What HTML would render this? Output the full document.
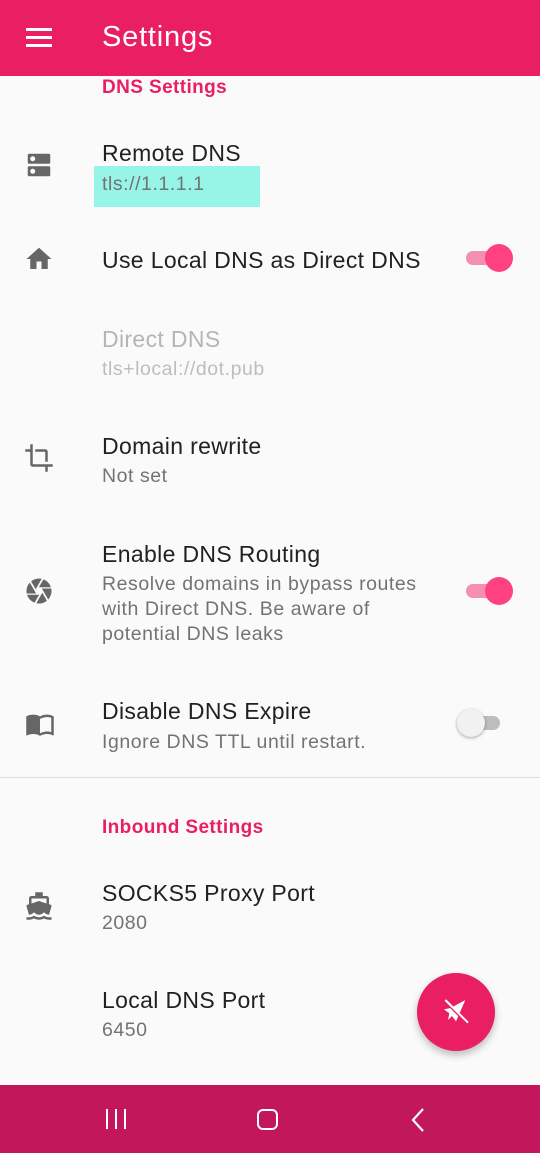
<!DOCTYPE html>
<html><head><meta charset="utf-8"><style>
*{margin:0;padding:0;box-sizing:border-box}
body{width:540px;height:1153px;background:#fafafa;font-family:"Liberation Sans",Roboto,sans-serif;position:relative;overflow:hidden}
.a{position:absolute}
.bar{left:0;top:0;width:540px;height:76px;background:#e91e63}
.t{font-size:23px;letter-spacing:.35px;color:#212121;left:102px;white-space:nowrap}
.s{font-size:19.5px;letter-spacing:.55px;color:#737373;left:102px;line-height:25px;white-space:nowrap}
.h{font-size:19px;letter-spacing:.4px;color:#e91e63;font-weight:bold;left:102px}
.ic{left:24px}
.sw{width:34px;height:14px;border-radius:7px;left:466px}
.k{width:28px;height:28px;border-radius:50%}
</style></head><body>
<div class="a bar"></div>
<div class="a" style="left:26px;top:28px;width:26px;height:3px;background:#fff;box-shadow:0 8px #fff,0 16px #fff"></div>
<div class="a" style="left:102px;top:21px;font-size:29px;letter-spacing:.8px;color:#fff">Settings</div>
<div class="a h" style="top:77px">DNS Settings</div>

<svg class="a ic" style="top:150px" width="30" height="30" viewBox="0 0 24 24"><path fill="#666" d="M20 13H4c-.55 0-1 .45-1 1v6c0 .55.45 1 1 1h16c.55 0 1-.45 1-1v-6c0-.55-.45-1-1-1zM7 19c-1.1 0-2-.9-2-2s.9-2 2-2 2 .9 2 2-.9 2-2 2zM20 3H4c-.55 0-1 .45-1 1v6c0 .55.45 1 1 1h16c.55 0 1-.45 1-1V4c0-.55-.45-1-1-1zM7 9c-1.1 0-2-.9-2-2s.9-2 2-2 2 .9 2 2-.9 2-2 2z"/></svg>
<div class="a t" style="top:140px">Remote DNS</div>
<div class="a" style="left:94px;top:166px;width:166px;height:41px;background:#97f5e8"></div>
<div class="a s" style="top:172px">tls://1.1.1.1</div>

<svg class="a ic" style="top:244px" width="30" height="30" viewBox="0 0 24 24"><path fill="#666" d="M10 20v-6h4v6h5v-8h3L12 3 2 12h3v8z"/></svg>
<div class="a t" style="top:247px">Use Local DNS as Direct DNS</div>
<div class="a sw" style="top:251px;background:#f48fb1"></div>
<div class="a k" style="left:485px;top:244px;background:#ff4081"></div>

<div class="a t" style="top:326px;color:#b5b5b5">Direct DNS</div>
<div class="a s" style="top:357px;color:#bdbdbd">tls+local://dot.pub</div>

<svg class="a ic" style="top:443px" width="30" height="30" viewBox="0 0 24 24"><path fill="#666" d="M17 15h2V7c0-1.1-.9-2-2-2H9v2h8v8zM7 17V1H5v4H1v2h4v10c0 1.1.9 2 2 2h10v4h2v-4h4v-2H7z"/></svg>
<div class="a t" style="top:433px">Domain rewrite</div>
<div class="a s" style="top:464px">Not set</div>

<svg class="a ic" style="top:576px" width="30" height="30" viewBox="0 0 24 24"><path fill="#666" d="M9.4 10.5l4.77-8.26C13.47 2.09 12.75 2 12 2c-2.4 0-4.6.85-6.32 2.25l3.66 6.350.06-.1zM21.54 9c-.92-2.92-3.150-5.26-6-6.34L11.88 9h9.66zm.26 1h-7.49l.29.5 4.76 8.25C21 16.97 22 14.610 22 12c0-.69-.07-1.35-.2-2zM8.54 12l-3.9-6.75C3.01 7.03 2 9.39 2 12c0 .69.07 1.35.2 2h7.49l-1.15-2zm-6.08 3c.92 2.92 3.15 5.26 6 6.34L12.12 15H2.46zm11.27 0l-3.9 6.76c.7.15 1.42.24 2.17.24 2.4 0 4.6-.85 6.32-2.25l-3.66-6.35-.93 1.6z"/></svg>
<div class="a t" style="top:541px">Enable DNS Routing</div>
<div class="a s" style="top:572px">Resolve domains in bypass routes<br>with Direct DNS. Be aware of<br>potential DNS leaks</div>
<div class="a sw" style="top:584px;background:#f48fb1"></div>
<div class="a k" style="left:485px;top:577px;background:#ff4081"></div>

<svg class="a ic" style="top:709px" width="32" height="30" viewBox="0 0 24 24"><path fill="#666" d="M21 5c-1.11-.35-2.33-.5-3.5-.5-1.95 0-4.05.4-5.5 1.5-1.45-1.1-3.55-1.5-5.5-1.5S2.45 4.9 1 6v14.65c0 .25.25.5.5.5.1 0 .15-.05.25-.05C3.1 20.45 5.05 20 6.5 20c1.95 0 4.05.4 5.5 1.5 1.35-.85 3.8-1.5 5.5-1.5 1.65 0 3.35.3 4.75 1.050.1.05.15.05.25.05.25 0 .5-.25.5-.5V6c-.6-.45-1.25-.75-2-1zm0 13.5c-1.1-.35-2.3-.5-3.5-.5-1.7 0-4.150.65-5.5 1.5V8c1.35-.85 3.8-1.5 5.5-1.5 1.2 0 2.4.15 3.5.5v11.5z"/></svg>
<div class="a t" style="top:698px">Disable DNS Expire</div>
<div class="a s" style="top:730px">Ignore DNS TTL until restart.</div>
<div class="a sw" style="top:716px;background:#bdbdbd"></div>
<div class="a k" style="left:457px;top:709px;background:#f1f1f1;box-shadow:0 1px 3px rgba(0,0,0,.35)"></div>

<div class="a" style="left:0;top:777px;width:540px;height:1px;background:#ddd"></div>
<div class="a h" style="top:817px">Inbound Settings</div>

<svg class="a ic" style="top:890px" width="30" height="32" viewBox="0 0 24 24"><path fill="#666" d="M20 21c-1.39 0-2.78-.47-4-1.32-2.44 1.71-5.56 1.71-8 0C6.78 20.53 5.39 21 4 21H2v2h2c1.38 0 2.74-.35 4-.99 2.52 1.29 5.48 1.29 8 0 1.26.65 2.62.99 4 .99h2v-2h-2zM3.950 19H4c1.6 0 3.02-.88 4-2 .98 1.12 2.4 2 4 2s3.02-.88 4-2c.98 1.12 2.4 2 4 2h.05l1.89-6.68c.08-.26.06-.54-.06-.78s-.34-.42-.6-.5L20 10.62V6c0-1.1-.9-2-2-2h-3V1H9v3H6c-1.1 0-2 .9-2 2v4.62l-1.29.42c-.26.08-.48.26-.6.5s-.15.52-.06.78L3.95 19zM6 6h12v3.97L12 8 6 9.97V6z"/></svg>
<div class="a t" style="top:880px">SOCKS5 Proxy Port</div>
<div class="a s" style="top:911px">2080</div>

<div class="a t" style="top:987px">Local DNS Port</div>
<div class="a s" style="top:1018px">6450</div>

<div class="a" style="left:417px;top:973px;width:78px;height:78px;border-radius:50%;background:#e91e63;box-shadow:0 4px 8px rgba(0,0,0,.25)"></div>
<svg class="a" style="left:440px;top:996px" width="32" height="32" viewBox="0 0 24 24"><path fill="#fff" d="M19 3L8 9l-5 1 4 3-1 5 3-3 3 4 7-16z"/><path stroke="#e91e63" stroke-width="2" d="M4 4l16 16"/><path stroke="#fff" stroke-width="1.5" d="M4 3l17 17"/></svg>

<div class="a" style="left:0;top:1085px;width:540px;height:68px;background:#c2185b"></div>
<div class="a" style="left:106px;top:1109px;width:2px;height:20px;background:#fff;box-shadow:9px 0 #fff,18px 0 #fff"></div>
<div class="a" style="left:257px;top:1109px;width:21px;height:21px;border:2px solid #fff;border-radius:6px"></div>
<svg class="a" style="left:410px;top:1107px" width="16" height="26" viewBox="0 0 16 26"><path d="M13 2L3 13l10 11" stroke="#fff" stroke-width="2.2" fill="none"/></svg>
</body></html>
